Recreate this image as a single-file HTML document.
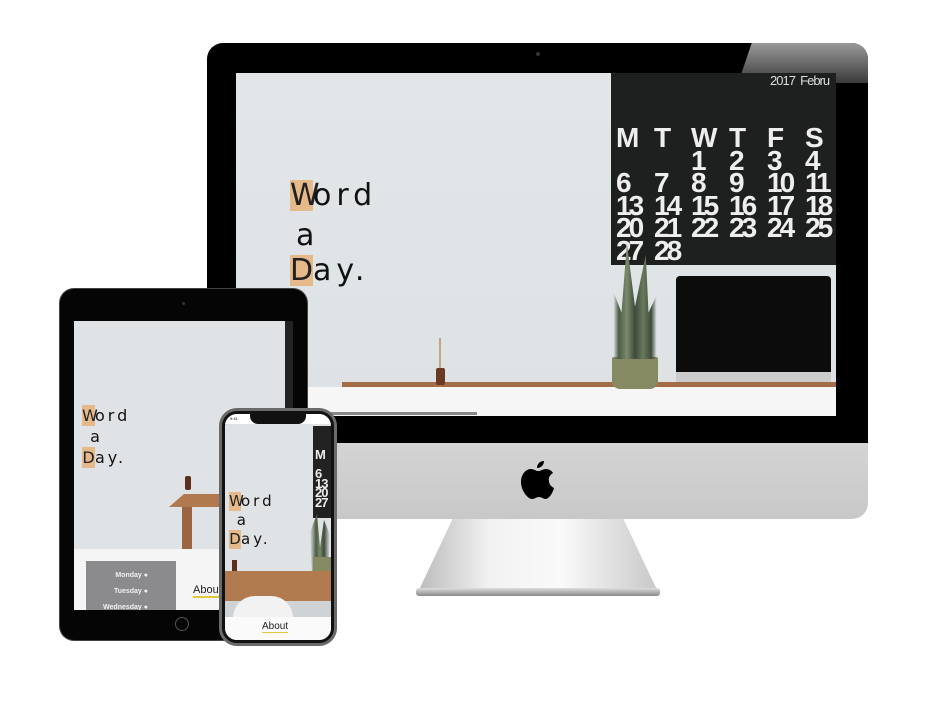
<!DOCTYPE html>
<html><head><meta charset="utf-8"><style>
*{margin:0;padding:0;box-sizing:border-box}
body{width:940px;height:726px;background:#fff;position:relative;overflow:hidden;font-family:"Liberation Sans",sans-serif}
.a{position:absolute}
.col{position:absolute;color:#eee;font-weight:bold;font-size:28px;line-height:22.6px;letter-spacing:-3px;width:40px}
.word{position:absolute;font-family:"DejaVu Sans",sans-serif;color:#111}
.tile{display:inline-block;background:#e6b98a;color:#222;text-align:center}
</style></head><body>

<div class="a" style="left:418px;top:516px;width:240px;height:76px;background:linear-gradient(90deg,#bbb,#f2f2f2 30%,#fafafa 60%,#c8c8c8);clip-path:polygon(15% 0,85% 0,100% 100%,0 100%)"></div>
<div class="a" style="left:416px;top:588px;width:244px;height:8px;border-radius:3px;background:linear-gradient(#ddd,#8a8a8a)"></div>
<div class="a" style="left:207px;top:430px;width:661px;height:89px;border-radius:0 0 16px 16px;background:linear-gradient(#d6d6d6,#c8c8c8)"></div>
<div class="a" style="left:207px;top:43px;width:661px;height:400px;border-radius:16px 16px 0 0;background:#000;overflow:hidden">
  <div class="a" style="left:510px;top:0;width:151px;height:40px;background:linear-gradient(180deg,#9a9a9a,#3a3a3a);clip-path:polygon(23% 0,100% 0,100% 100%,14% 100%)"></div>
</div>
<div class="a" style="left:536px;top:52px;width:4px;height:4px;border-radius:2px;background:#333"></div>
<svg class="a" style="left:521px;top:461px" width="34" height="40" viewBox="0 0 34 40"><path fill="#000" d="M23 0c0 4-3 7-7 7 0-4 3-7 7-7zM17 10c3 0 5-2 8-2 3 0 6 2 7 4-3 2-5 5-4 8 0 4 3 6 5 7-1 4-4 10-8 11-3 0-4-2-7-2s-4 2-7 2C7 38 0 30 0 21 0 13 5 8 10 8c3 0 5 2 7 2z"/></svg>
<div class="a" style="left:236px;top:73px;width:600px;height:343px;background:linear-gradient(180deg,#e2e6e8,#dde2e4);overflow:hidden">
  <div class="a" style="left:375px;top:0;width:225px;height:192px;background:#1e201f"></div>
  <div class="a" style="left:534px;top:0;color:#ddd;font-size:13px;letter-spacing:-1px">2017 &nbsp;Febru</div>
  <div class="col" style="left:380px;top:54px">M<br><br>6<br>13<br>20<br>27</div>
  <div class="col" style="left:418px;top:54px">T<br><br>7<br>14<br>21<br>28</div>
  <div class="col" style="left:455px;top:54px">W<br>1<br>8<br>15<br>22</div>
  <div class="col" style="left:493px;top:54px">T<br>2<br>9<br>16<br>23</div>
  <div class="col" style="left:531px;top:54px">F<br>3<br>10<br>17<br>24</div>
  <div class="col" style="left:569px;top:54px">S<br>4<br>11<br>18<br>25</div>
  <div class="a" style="left:440px;top:203px;width:155px;height:110px;background:#0c0c0c;border-radius:4px;border-bottom:14px solid #ccc"></div>
  <div class="a" style="left:505px;top:313px;width:22px;height:8px;background:#aaa"></div>
  <div class="a" style="left:106px;top:309px;width:494px;height:5px;background:#a46d48"></div>
  <div class="a" style="left:0;top:314px;width:600px;height:29px;background:#f6f6f6"></div>
  <div class="a" style="left:0;top:339px;width:241px;height:3px;background:#888"></div>
  <div class="a" style="left:376px;top:284px;width:46px;height:32px;background:#858a62;border-radius:2px 2px 8px 8px"></div>
  <div class="a" style="left:372px;top:170px;width:54px;height:116px;background:linear-gradient(90deg,transparent 10%,#4c5a45 20%,#7b8a6c 35%,#3d4a3a 50%,#6a7a5c 65%,#3f4c3c 80%,transparent 90%);clip-path:polygon(10% 100%,0 30%,25% 60%,35% 0,50% 55%,70% 10%,75% 60%,100% 35%,90% 100%)"></div>
  <div class="a" style="left:200px;top:295px;width:9px;height:17px;background:#6a3a22;border-radius:2px"></div>
  <div class="a" style="left:203px;top:265px;width:2px;height:30px;background:#c7a088"></div>
  <div class="word" style="left:54px;top:107px;font-size:30px;line-height:31px;letter-spacing:5px"><span class="tile" style="width:23px;letter-spacing:0">W</span>ord</div>
  <div class="word" style="left:60px;top:145px;font-size:30px">a</div>
  <div class="word" style="left:54px;top:182px;font-size:30px;line-height:31px;letter-spacing:5px"><span class="tile" style="width:23px;letter-spacing:0">D</span>ay.</div>
</div>

<div class="a" style="left:60px;top:289px;width:247px;height:351px;border-radius:14px;background:#050505;box-shadow:0 0 0 1px #444"></div>
<div class="a" style="left:182px;top:302px;width:3px;height:3px;border-radius:2px;background:#333"></div>
<div class="a" style="left:175px;top:617px;width:14px;height:14px;border-radius:7px;border:1px solid #555"></div>
<div class="a" style="left:74px;top:321px;width:219px;height:289px;background:#dfe3e5;overflow:hidden">
  <div class="a" style="left:211px;top:0;width:8px;height:100px;background:#222"></div>
  <div class="a" style="left:95px;top:173px;width:124px;height:13px;background:#b17a4e;clip-path:polygon(12% 0,100% 0,100% 100%,0 100%)"></div>
  <div class="a" style="left:108px;top:186px;width:10px;height:44px;background:#9a6540"></div>
  <div class="a" style="left:111px;top:155px;width:6px;height:14px;background:#5a301c;border-radius:2px"></div>
  <div class="a" style="left:0;top:228px;width:219px;height:61px;background:#f5f5f5"></div>
  <div class="a" style="left:12px;top:240px;width:90px;height:49px;background:#8b8b8d;color:#f0f0f0;font-size:7px;font-weight:bold;text-align:right;padding:7px 28px 0 0;line-height:16px">Monday ●<br>Tuesday ●<br>Wednesday ●</div>
  <div class="a" style="left:119px;top:263px;font-size:11px;color:#222;border-bottom:2px solid #e3c93a">About</div>
  <div class="word" style="left:8px;top:84px;font-size:16px;line-height:21px;letter-spacing:3px"><span class="tile" style="width:13px;letter-spacing:0">W</span>ord<br>&nbsp;a<br><span class="tile" style="width:13px;letter-spacing:0">D</span>ay.</div>
</div>

<div class="a" style="left:219px;top:408px;width:118px;height:238px;border-radius:18px;background:#111;border:3px solid #6a6a6a"></div>
<div class="a" style="left:225px;top:414px;width:106px;height:226px;border-radius:12px;background:#dfe3e5;overflow:hidden">
  <div class="a" style="left:0;top:0;width:106px;height:10px;background:#fff"></div>
  <div class="a" style="left:25px;top:0;width:56px;height:10px;background:#111;border-radius:0 0 8px 8px"></div>
  <div class="a" style="left:5px;top:2px;font-size:4px">9:41</div>
  <div class="a" style="left:88px;top:12px;width:18px;height:92px;background:#222;color:#eee;font-weight:bold;font-size:13px;line-height:9.5px;letter-spacing:-1px;padding:24px 0 0 2px">M<br><br>6<br>13<br>20<br>27</div>
  <div class="a" style="left:85px;top:100px;width:20px;height:60px;background:linear-gradient(90deg,transparent,#4d5b45 30%,#7b8a6c 50%,#3d4a3a 70%,transparent);clip-path:polygon(10% 100%,0 30%,35% 0,50% 55%,70% 10%,100% 35%,90% 100%)"></div>
  <div class="a" style="left:88px;top:143px;width:18px;height:18px;background:#858a62"></div>
  <div class="a" style="left:0;top:157px;width:106px;height:30px;background:#b27a4f"></div>
  <div class="a" style="left:7px;top:146px;width:5px;height:11px;background:#5a301c"></div>
  <div class="a" style="left:0;top:187px;width:106px;height:16px;background:#cfd3d6"></div>
  <div class="a" style="left:8px;top:182px;width:60px;height:22px;border-radius:30px 30px 0 0;background:#f2f2f2"></div>
  <div class="a" style="left:0;top:203px;width:106px;height:23px;background:#fafafa"></div>
  <div class="a" style="left:37px;top:207px;font-size:10px;color:#222;border-bottom:1px solid #e3c93a;line-height:11px">About</div>
  <div class="word" style="left:4px;top:78px;font-size:15px;line-height:19px;letter-spacing:3px"><span class="tile" style="width:12px;letter-spacing:0">W</span>ord<br>&nbsp;a<br><span class="tile" style="width:12px;letter-spacing:0">D</span>ay.</div>
</div>
</body></html>
